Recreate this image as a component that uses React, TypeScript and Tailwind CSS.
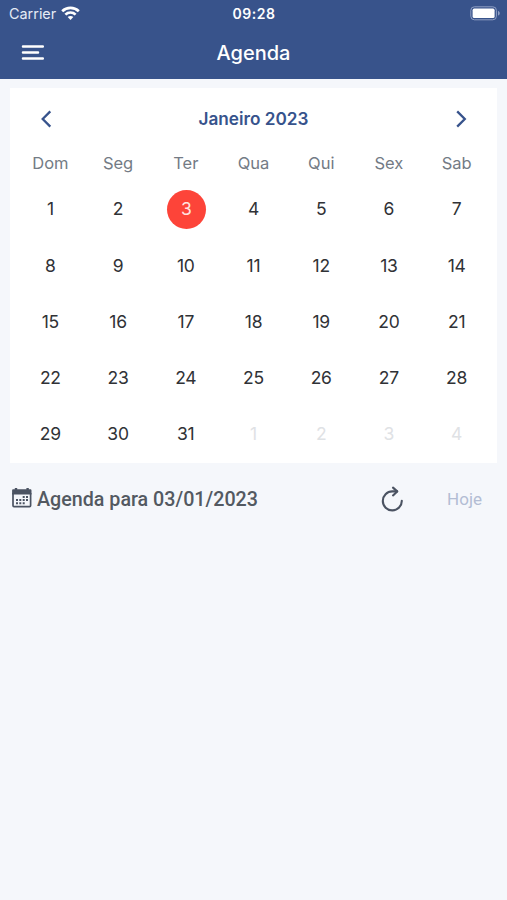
const WEEKDAYS = ['Dom', 'Seg', 'Ter', 'Qua', 'Qui', 'Sex', 'Sab'];

const DAYS = Array.from({ length: 35 }, (_, i) => ({
  day: i < 31 ? i + 1 : i - 30,
  outside: i >= 31,
  selected: i === 2,
}));

function WifiIcon() {
  return (
    <svg width="19" height="15" viewBox="0 0 19 15" fill="none" stroke="#fff" strokeWidth="2.7">
      <path d="M1.2 5.3C5.8 .8 13.2 .8 17.8 5.3" />
      <path d="M4.4 8.6c2.8-2.8 7.4-2.8 10.2 0" />
      <path d="M9.5 14l-2.8-2.9c1.6-1.4 4-1.4 5.6 0z" fill="#fff" stroke="none" />
    </svg>
  );
}

function BatteryIcon() {
  return (
    <svg width="31" height="15" viewBox="0 0 31 15">
      <rect x=".8" y=".8" width="25.6" height="13" rx="3.6" fill="none" stroke="#8f9fc4" strokeWidth="1" />
      <rect x="2.6" y="2.6" width="22" height="9.4" rx="1.6" fill="#fff" />
      <path d="M28 5v4.6c2.4-.7 2.4-3.9 0-4.6z" fill="#8f9fc4" />
    </svg>
  );
}

function MenuIcon() {
  return (
    <svg width="24" height="18" viewBox="0 0 24 18" fill="none" stroke="#fff" strokeWidth="2.5" strokeLinecap="round">
      <path d="M2 2.4h19.8M2 8.4h15M2 14.4h19.8" />
    </svg>
  );
}

function Chevron({ right = false }: { right?: boolean }) {
  return (
    <svg width="12" height="18" viewBox="0 0 12 18" fill="none" stroke="#37538c" strokeWidth="2.3">
      <path d={right ? 'M2.2 1.4L9.8 9l-7.6 7.6' : 'M10.3 1.4L2.7 9l7.6 7.6'} />
    </svg>
  );
}

function CalendarIcon() {
  return (
    <svg className="-mt-[2px]" width="20" height="20" viewBox="0 0 20 20" fill="#4b5362">
      <path d="M1.4 1.2H2.8V0h2.4v1.2h9.2V0h2.4v1.2h1.4c.8 0 1.3.5 1.3 1.2v4.1H.1V2.4c0-.7.5-1.2 1.3-1.2z" />
      <path d="M1 5v12.6c0 .6.4 1 1 1h15.6c.6 0 1-.4 1-1V5" fill="none" stroke="#4b5362" strokeWidth="1.7" />
      <path d="M10.7 8h2v2h-2zM14 8h2v2h-2zM4 11.1h2v2H4zM7.3 11.1h2v2h-2zM10.7 11.1h2v2h-2zM14 11.1h2v2h-2zM4 14.3h2v2H4zM7.3 14.3h2v2h-2zM10.7 14.3h2v2h-2z" />
    </svg>
  );
}

function RefreshIcon() {
  return (
    <svg width="24" height="26" viewBox="0 0 24 26" fill="none" stroke="#4b5362" strokeWidth="2.1" strokeLinecap="round" strokeLinejoin="round">
      <path d="M21.8 14.8A9.5 9.5 0 1 1 12.3 5.4h4.9" />
      <path d="M13 1.6l4.2 3.8-4.2 4" />
    </svg>
  );
}

export default function App() {
  return (
    <div className="flex h-[900px] w-full flex-col bg-[#f5f7fb] font-['Inter','Liberation_Sans',sans-serif]">
      <header className="h-[79px] bg-[#38538b] text-white">
        <div className="grid h-[26px] grid-cols-3 items-center pl-[9px] pr-[6px]">
          <div className="flex items-center gap-[5px] pt-[1px] text-[14.4px] text-[#e5ebf5]">
            <span>Carrier</span>
            <WifiIcon />
          </div>
          <span className="pr-[2px] pt-[1px] text-center text-[14px] font-semibold tracking-[0.5px]">09:28</span>
          <div className="flex justify-end">
            <BatteryIcon />
          </div>
        </div>
        <div className="grid h-[53px] grid-cols-3 items-center px-[21px]">
          <MenuIcon />
          <h1 className="text-center text-[20px] font-medium">Agenda</h1>
        </div>
      </header>

      <main className="px-[10px] pt-[9px]">
        <section className="h-[375px] bg-white px-[6.5px]">
          <div className="flex h-[61px] items-center justify-between px-[23px]">
            <Chevron />
            <h2 className="pt-px text-[17.2px] font-semibold text-[#37538c]">Janeiro 2023</h2>
            <Chevron right />
          </div>
          <div className="grid h-[29px] grid-cols-7 items-center text-center text-[16.5px] text-[#737b85]">
            {WEEKDAYS.map((name) => (
              <span key={name}>{name}</span>
            ))}
          </div>
          <div className="grid auto-rows-[56.2px] grid-cols-7 place-items-center pt-[3.4px] text-[17.5px] tracking-[-0.2px] text-[#303236]">
            {DAYS.map(({ day, outside, selected }, i) => (
              <span
                key={i}
                className={
                  selected
                    ? 'ml-px flex size-[39px] items-center justify-center rounded-full bg-[#fd4439] text-[#ffe3e0]'
                    : outside
                      ? 'text-[#dfe2e5]'
                      : ''
                }
              >
                {day}
              </span>
            ))}
          </div>
        </section>

        <div className="flex h-[72px] items-center pl-[2px] pr-[15px] font-['Roboto','Liberation_Sans',sans-serif]">
          <CalendarIcon />
          <h3 className="ml-[5px] pt-[2px] text-[19.7px] font-medium text-[#535961]">Agenda para 03/01/2023</h3>
          <div className="ml-auto flex items-center gap-[43px]">
            <RefreshIcon />
            <span className="pt-[2px] text-[17px] text-[#b3bdd4]">Hoje</span>
          </div>
        </div>
      </main>
    </div>
  );
}
